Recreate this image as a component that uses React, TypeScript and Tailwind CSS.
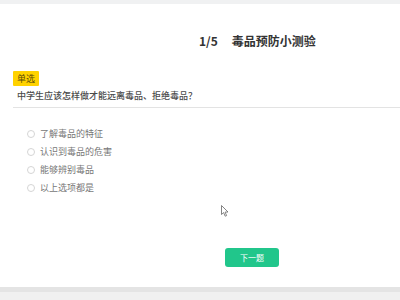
import React from "react";

const font = { fontFamily: '"Noto Sans CJK SC", "Noto Sans", sans-serif' };

export default function App() {
  const options = ["了解毒品的特征", "认识到毒品的危害", "能够辨别毒品", "以上选项都是"];
  return (
    <div className="relative w-[400px] h-[300px] bg-white flex flex-col overflow-hidden" style={font}>
      <div className="h-[4px] bg-[#f0f1f2]" />
      <div className="pt-[27px] pl-[199px] flex items-center gap-[14px] text-[12px] leading-[20px] font-bold text-[#333]">
        <span>1/5</span>
        <span>毒品预防小测验</span>
      </div>
      <div className="mt-[20px] ml-[13px] flex">
        <span className="bg-[#ffd200] text-[#5a4a08] text-[9px] leading-[15px] px-[4px] rounded-[1px]">单选</span>
      </div>
      <div className="ml-[13px] pl-[4px] mt-[3px] pb-[4px] border-b border-[#e3e3e3] text-[9px] leading-[14px] font-medium text-[#4a4a4a]">
        中学生应该怎样做才能远离毒品、拒绝毒品？
      </div>
      <div className="mt-[17px] pl-[27px] flex flex-col">
        {options.map((o) => (
          <div key={o} className="flex items-center gap-[5px] h-[18px]">
            <span className="w-[8px] h-[8px] rounded-full border border-[#d5d5d5] bg-white" />
            <span className="text-[9px] leading-[18px] text-[#777]">{o}</span>
          </div>
        ))}
      </div>
      <div className="mt-[51px] ml-[225px] flex">
        <button className="w-[54px] h-[19px] rounded-[3px] bg-[#21c68b] text-white text-[8px] leading-[19px] flex items-center justify-center">
          下一题
        </button>
      </div>
      <div className="flex-1" />
      <div className="h-[5px] bg-[#e4e4e4]" />
      <div className="h-[8px] bg-[#f0f0f0]" />
      <svg className="absolute left-[221px] top-[205px]" width="8" height="12" viewBox="0 0 8 12">
        <path d="M0.5 0.5 L0.5 9.5 L2.6 7.6 L4.2 11.2 L5.6 10.6 L4.1 7.1 L7 7 Z" fill="white" stroke="#666" strokeWidth="0.8" strokeLinejoin="round" />
      </svg>
    </div>
  );
}
